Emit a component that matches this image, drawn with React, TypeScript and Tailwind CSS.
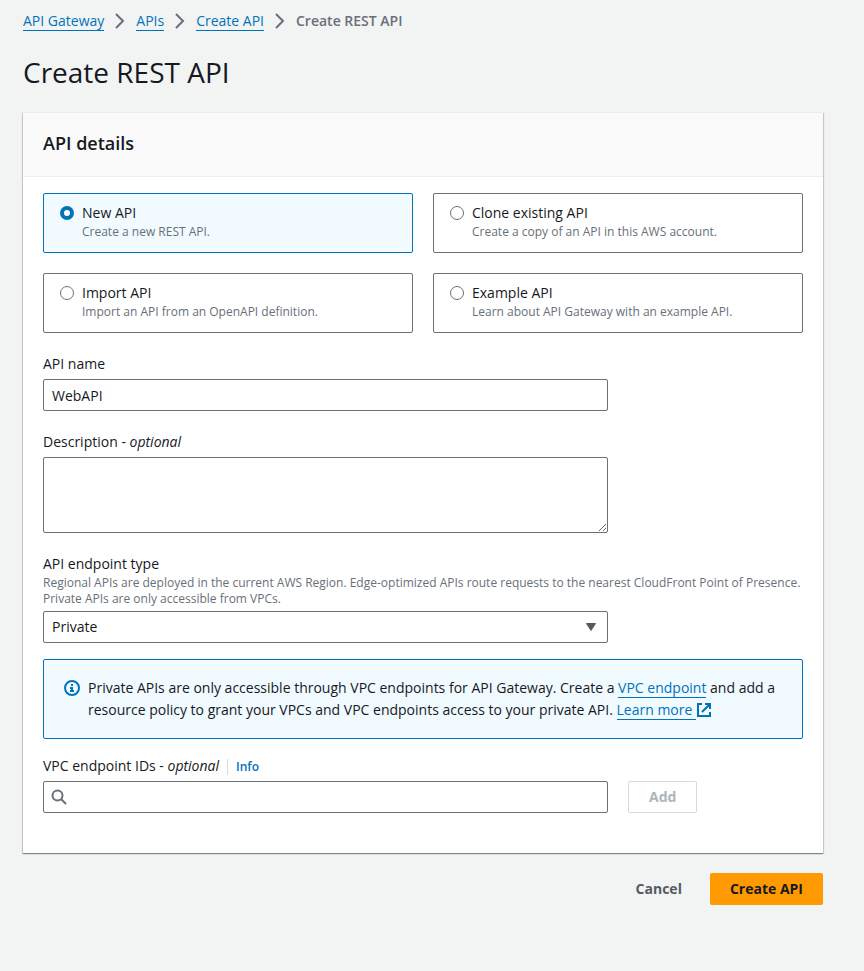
import React, { useState } from "react";

const linkClass = "border-b border-[#0073bb] text-[#0073bb]";
const boxClass = "w-full rounded-xs border border-[#687078] bg-white px-2";

function Crumb({ children }: { children: string }) {
  return (
    <li className="flex items-center">
      <a href="#" className={`${linkClass} leading-[19px]`}>
        {children}
      </a>
      <svg
        className="mx-2 size-4 text-[#687078]"
        viewBox="0 0 16 16"
        fill="none"
        stroke="currentColor"
        strokeWidth="2"
        aria-hidden="true"
      >
        <path d="M4 1l7 7-7 7" />
      </svg>
    </li>
  );
}

const kinds = [
  { id: "new", title: "New API", text: "Create a new REST API." },
  { id: "clone", title: "Clone existing API", text: "Create a copy of an API in this AWS account." },
  { id: "import", title: "Import API", text: "Import an API from an OpenAPI definition." },
  { id: "example", title: "Example API", text: "Learn about API Gateway with an example API." },
];

export default function App() {
  const [kind, setKind] = useState("new");
  const [name, setName] = useState("WebAPI");

  return (
    <div className="min-h-screen bg-[#f2f3f3] pt-[10px] pr-[41px] pb-16 pl-[23px] font-['Open_Sans',sans-serif] text-sm leading-[22px] text-[#16191f]">
      <nav aria-label="Breadcrumbs">
        <ol className="flex flex-wrap items-center">
          <Crumb>API Gateway</Crumb>
          <Crumb>APIs</Crumb>
          <Crumb>Create API</Crumb>
          <li className="font-semibold text-[#687078]" aria-current="page">
            Create REST API
          </li>
        </ol>
      </nav>

      <h1 className="mt-[22px] text-[28px] leading-9">Create REST API</h1>

      <section className="mt-[22px] border-t border-[#eaeded] bg-white shadow-[0_1px_1px_0_rgba(0,28,36,0.3),1px_1px_1px_0_rgba(0,28,36,0.15),-1px_1px_1px_0_rgba(0,28,36,0.15)]">
        <header className="border-b border-[#eaeded] bg-[#fafafa] px-5 pt-[18px] pb-[21px]">
          <h2 className="text-lg leading-6 font-semibold">API details</h2>
        </header>

        <div className="px-5 pt-4 pb-10">
          <div className="grid grid-cols-2 gap-5" role="radiogroup" aria-label="API details">
            {kinds.map((k) => (
              <label
                key={k.id}
                className={`flex gap-2 rounded-xs border px-4 pt-2 pb-3 ${
                  kind === k.id ? "border-[#0073bb] bg-[#f1faff]" : "border-[#687078] bg-white"
                }`}
              >
                <input
                  type="radio"
                  name="kind"
                  checked={kind === k.id}
                  onChange={() => setKind(k.id)}
                  className="mt-1 size-[14px] shrink-0 appearance-none rounded-full border border-[#687078] bg-white checked:border-4 checked:border-[#0073bb]"
                />
                <span>
                  <span className="block">{k.title}</span>
                  <span className="block text-xs leading-4 text-[#687078]">{k.text}</span>
                </span>
              </label>
            ))}
          </div>

          <div className="mt-5 grid grid-cols-4 gap-5">
            <div className="col-span-3">
              <label htmlFor="name" className="mb-1 block">
                API name
              </label>
              <input
                id="name"
                value={name}
                onChange={(e) => setName(e.target.value)}
                className={`${boxClass} block h-8`}
              />
            </div>
          </div>

          <div className="mt-5 grid grid-cols-4 gap-5">
            <div className="col-span-3">
              <label htmlFor="description" className="mb-1 block">
                Description - <i>optional</i>
              </label>
              <textarea id="description" className={`${boxClass} block h-[76px]`} />
            </div>
          </div>

          <div className="mt-5">
            <label htmlFor="endpoint" className="block">
              API endpoint type
            </label>
            <p id="endpoint-help" className="mb-1 text-xs leading-4 text-[#687078]">
              Regional APIs are deployed in the current AWS Region. Edge-optimized APIs route requests to the nearest
              CloudFront Point of Presence. Private APIs are only accessible from VPCs.
            </p>
            <div className="grid grid-cols-4 gap-5">
              <div className="relative col-span-3">
                <select
                  id="endpoint"
                  aria-describedby="endpoint-help"
                  defaultValue="Private"
                  className={`${boxClass} block h-8 appearance-none`}
                >
                  <option>Regional</option>
                  <option>Edge-optimized</option>
                  <option>Private</option>
                </select>
                <svg
                  className="pointer-events-none absolute top-2 right-2 size-4 text-[#545b64]"
                  viewBox="0 0 16 16"
                  fill="currentColor"
                  stroke="currentColor"
                  strokeLinejoin="round"
                  aria-hidden="true"
                >
                  <path d="M2.500 4.500h9L7 11.500z" />
                </svg>
              </div>
            </div>
          </div>

          <div className="mt-4 flex gap-2 rounded-xs border border-[#0073bb] bg-[#f1faff] px-5 py-[17px]">
            <svg
              className="mt-[3px] size-4 shrink-0 text-[#0073bb]"
              viewBox="0 0 16 16"
              fill="none"
              stroke="currentColor"
              strokeWidth="2"
              aria-hidden="true"
            >
              <circle cx="8" cy="8" r="7" />
              <path d="M8 11V8H6M10 11H6M8 6V4" />
            </svg>
            <p>
              Private APIs are only accessible through VPC endpoints for API Gateway. Create a{" "}
              <a href="#" className={linkClass}>
                VPC endpoint
              </a>{" "}
              and add a resource policy to grant your VPCs and VPC endpoints access to your private API.{" "}
              <a href="#" className="text-[#0073bb]">
                <span className="border-b border-[#0073bb]">Learn more </span>
                <svg
                  className="inline size-4 align-[-3px]"
                  viewBox="0 0 16 16"
                  fill="none"
                  stroke="currentColor"
                  strokeWidth="2"
                  role="img"
                  aria-label="Opens in a new tab"
                >
                  <path d="M6 2H2v12h12v-4M9 2h5v5M6 10l7.500-7.500" />
                </svg>
              </a>
            </p>
          </div>

          <div className="mt-4">
            <div className="mb-1 flex items-baseline">
              <label htmlFor="vpc">
                VPC endpoint IDs - <i>optional</i>
              </label>
              <a href="#" className="ml-2 border-l border-[#d5dbdb] pl-2 text-xs leading-4 font-semibold text-[#0073bb]">
                Info
              </a>
            </div>
            <div className="grid grid-cols-4 gap-5">
              <div className="relative col-span-3">
                <input id="vpc" type="search" className={`${boxClass} block h-8 pl-8`} />
                <svg
                  className="pointer-events-none absolute top-2 left-2 size-4 text-[#687078]"
                  viewBox="0 0 16 16"
                  fill="none"
                  stroke="currentColor"
                  strokeWidth="2"
                  aria-hidden="true"
                >
                  <circle cx="6.500" cy="6.500" r="5" />
                  <path d="M15 15l-5-5" />
                </svg>
              </div>
              <div>
                <button
                  type="button"
                  disabled
                  className="h-8 rounded-xs border border-[#d5dbdb] bg-white px-5 font-bold text-[#aab7b8]"
                >
                  Add
                </button>
              </div>
            </div>
          </div>
        </div>
      </section>

      <div className="mt-5 flex justify-end gap-2">
        <button type="button" className="h-8 px-5 font-bold text-[#545b64]">
          Cancel
        </button>
        <button type="submit" className="h-8 rounded-xs bg-[#ff9900] px-5 font-bold text-[#16191f]">
          Create API
        </button>
      </div>
    </div>
  );
}
